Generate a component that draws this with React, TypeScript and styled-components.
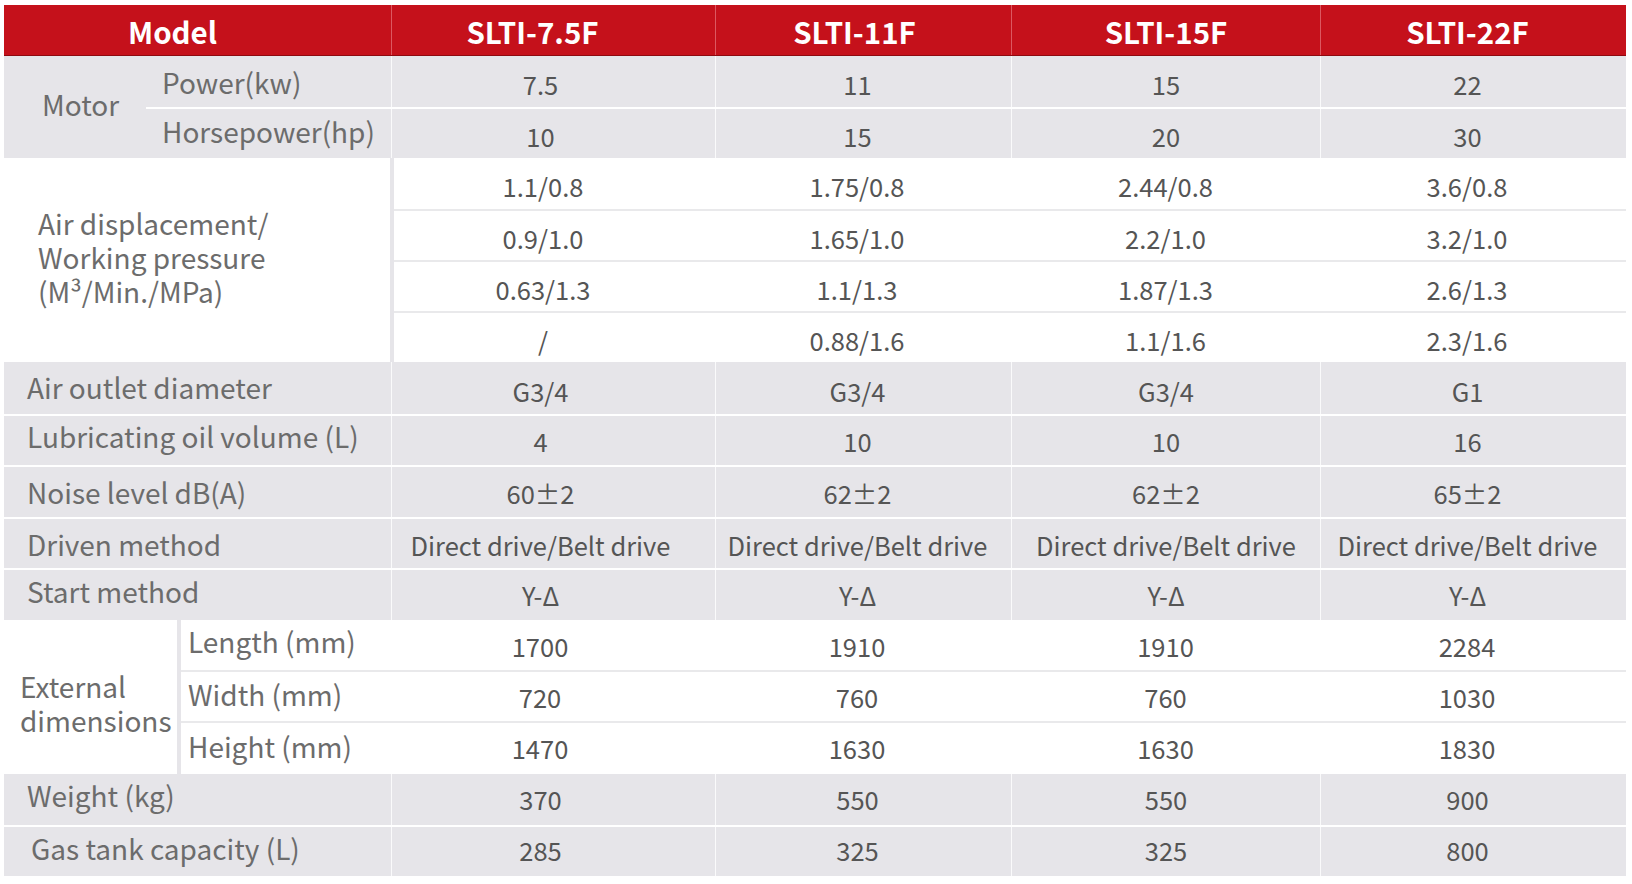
import React from 'react';
import styled, { createGlobalStyle } from 'styled-components';

const GlobalStyle = createGlobalStyle`
  html, body { margin: 0; padding: 0; background: #ffffff; }
  body { font-family: "Noto Sans CJK SC", "Noto Sans", sans-serif; }
`;

const COLS = [324, 296, 309, 306];
const SHIFT = [26, 12, 0, 12];
const HEAD_SHIFT = [42, 18, 0, 12];
const LABEL_W = 387;
const GRAY = '#e6e5e9';
const MODELS = ['SLTI-7.5F', 'SLTI-11F', 'SLTI-15F', 'SLTI-22F'];

const Table = styled.div`
  margin: 5px 0 0 4px;
  width: 1622px;
  display: flex;
  flex-direction: column;
`;

const HeaderRow = styled.div`
  display: flex;
  height: 51px;
  box-sizing: border-box;
  background: #c5111b;
  border-bottom: 1px solid #8e0a10;
  color: #ffffff;
  font-weight: 700;
  font-size: 29.5px;
`;

const HeadCell = styled.div<{ $w: number; $pr: number; $divider?: boolean }>`
  width: ${(p) => p.$w}px;
  box-sizing: border-box;
  display: flex;
  align-items: center;
  justify-content: center;
  padding-right: ${(p) => p.$pr}px;
  padding-top: 2px;
  border-left: ${(p) => (p.$divider ? '1px solid #dc5860' : 'none')};
`;

const Band = styled.div<{ $gray?: boolean; $sep?: boolean }>`
  display: flex;
  background: ${(p) => (p.$gray ? GRAY : '#ffffff')};
  border-top: ${(p) => (p.$sep ? '2px solid #ffffff' : 'none')};
`;

const GroupLabel = styled.div<{ $w: number; $pl: number; $dy: number; $bar?: boolean }>`
  width: ${(p) => p.$w}px;
  flex: none;
  box-sizing: border-box;
  padding-left: ${(p) => p.$pl}px;
  padding-top: ${(p) => (p.$dy > 0 ? p.$dy * 2 : 0)}px;
  padding-bottom: ${(p) => (p.$dy < 0 ? -p.$dy * 2 : 0)}px;
  display: flex;
  align-items: center;
  font-size: 28px;
  line-height: 34px;
  color: #6c6c6c;
  border-right: ${(p) => (p.$bar ? `4px solid ${GRAY}` : 'none')};
`;

const Stack = styled.div`
  flex: 1;
  display: flex;
  flex-direction: column;
`;

const Row = styled.div<{ $h: number; $line?: 'white' | 'gray' }>`
  display: flex;
  height: ${(p) => p.$h}px;
  box-sizing: border-box;
  border-top: ${(p) =>
    p.$line === 'white' ? '2px solid #ffffff' : p.$line === 'gray' ? '2px solid #e9e9eb' : 'none'};
`;

const Label = styled.div<{ $w: number; $pl: number; $up: number }>`
  width: ${(p) => p.$w}px;
  flex: none;
  box-sizing: border-box;
  padding-left: ${(p) => p.$pl}px;
  padding-bottom: ${(p) => p.$up * 2}px;
  display: flex;
  align-items: center;
  font-size: 28px;
  color: #6c6c6c;
  white-space: nowrap;
`;

const Cell = styled.div<{ $w: number; $pr: number; $top: number; $bottom: number; $rule?: boolean }>`
  width: ${(p) => p.$w}px;
  flex: none;
  box-sizing: border-box;
  padding: ${(p) => `${p.$top}px ${p.$pr}px ${p.$bottom}px 0`};
  display: flex;
  align-items: center;
  justify-content: center;
  font-size: 25.5px;
  color: #555555;
  white-space: nowrap;
  border-left: ${(p) => (p.$rule ? '1px solid rgba(255,255,255,0.8)' : 'none')};
`;

type Vals = string[];

const DataCells: React.FC<{ vals: Vals; gray?: boolean; trim?: number; up?: number }> = ({
  vals,
  gray,
  trim = 0,
  up = 0,
}) => {
  const top = up <= 2 ? 4 - 2 * up : 0;
  const bottom = up > 2 ? 2 * up - 4 : 0;
  return (
    <>
      {vals.map((v, i) => (
        <Cell
          key={i}
          $w={i === 0 ? COLS[0] - trim : COLS[i]}
          $pr={i === 0 ? Math.max(SHIFT[0] - trim, 0) : SHIFT[i]}
          $top={top}
          $bottom={bottom}
          $rule={gray}
        >
          {v}
        </Cell>
      ))}
    </>
  );
};

type SimpleRow = { label: string; pl: number; h: number; up: number; dup: number; vals: Vals };

const simpleRows: SimpleRow[] = [
  { label: 'Air outlet diameter', pl: 23, h: 52, up: 1, dup: 0, vals: ['G3/4', 'G3/4', 'G3/4', 'G1'] },
  { label: 'Lubricating oil volume (L)', pl: 23, h: 51, up: 5, dup: 2, vals: ['4', '10', '10', '16'] },
  { label: 'Noise level dB(A)', pl: 23, h: 52, up: 0, dup: 2, vals: ['60±2', '62±2', '62±2', '65±2'] },
  {
    label: 'Driven method',
    pl: 23,
    h: 51,
    up: -1,
    dup: 1,
    vals: ['Direct drive/Belt drive', 'Direct drive/Belt drive', 'Direct drive/Belt drive', 'Direct drive/Belt drive'],
  },
  { label: 'Start method', pl: 23, h: 52, up: 4, dup: 3, vals: ['Y-Δ', 'Y-Δ', 'Y-Δ', 'Y-Δ'] },
];

const airRows: Vals[] = [
  ['1.1/0.8', '1.75/0.8', '2.44/0.8', '3.6/0.8'],
  ['0.9/1.0', '1.65/1.0', '2.2/1.0', '3.2/1.0'],
  ['0.63/1.3', '1.1/1.3', '1.87/1.3', '2.6/1.3'],
  ['/', '0.88/1.6', '1.1/1.6', '2.3/1.6'],
];

const dimRows: { label: string; h: number; up: number; dup: number; vals: Vals }[] = [
  { label: 'Length (mm)', h: 50, up: 4, dup: 2, vals: ['1700', '1910', '1910', '2284'] },
  { label: 'Width (mm)', h: 51, up: 3, dup: 2, vals: ['720', '760', '760', '1030'] },
  { label: 'Height (mm)', h: 53, up: 3, dup: 3, vals: ['1470', '1630', '1630', '1830'] },
];

const tailRows: SimpleRow[] = [
  { label: 'Weight (kg)', pl: 23, h: 51, up: 5, dup: 3, vals: ['370', '550', '550', '900'] },
  { label: 'Gas tank capacity (L)', pl: 27, h: 51, up: 4, dup: 4, vals: ['285', '325', '325', '800'] },
];

const GrayRows: React.FC<{ rows: SimpleRow[] }> = ({ rows }) => (
  <>
    {rows.map((r, i) => (
      <Band key={r.label} $gray $sep={i > 0}>
        <Row $h={i > 0 ? r.h - 2 : r.h}>
          <Label $w={LABEL_W} $pl={r.pl} $up={r.up}>
            {r.label}
          </Label>
          <DataCells vals={r.vals} gray up={r.dup} />
        </Row>
      </Band>
    ))}
  </>
);

export default function App() {
  return (
    <>
      <GlobalStyle />
      <Table>
        <HeaderRow>
          <HeadCell $w={LABEL_W} $pr={50}>
            Model
          </HeadCell>
          {MODELS.map((m, i) => (
            <HeadCell key={m} $w={COLS[i]} $pr={HEAD_SHIFT[i]} $divider>
              {m}
            </HeadCell>
          ))}
        </HeaderRow>

        <Band $gray>
          <GroupLabel $w={142} $pl={38} $dy={-3}>
            Motor
          </GroupLabel>
          <Stack>
            <Row $h={51}>
              <Label $w={LABEL_W - 142} $pl={16} $up={0}>
                Power(kw)
              </Label>
              <DataCells vals={['7.5', '11', '15', '22']} gray />
            </Row>
            <Row $h={51} $line="white">
              <Label $w={LABEL_W - 142} $pl={16} $up={3}>
                Horsepower(hp)
              </Label>
              <DataCells vals={['10', '15', '20', '30']} gray />
            </Row>
          </Stack>
        </Band>

        <Band>
          <GroupLabel $w={LABEL_W + 3} $pl={34} $dy={-3} $bar>
            Air displacement/
            <br />
            Working pressure
            <br />
            (M³/Min./MPa)
          </GroupLabel>
          <Stack>
            {airRows.map((vals, i) => (
              <Row key={i} $h={51} $line={i > 0 ? 'gray' : undefined}>
                <DataCells vals={vals} trim={3} />
              </Row>
            ))}
          </Stack>
        </Band>

        <GrayRows rows={simpleRows} />

        <Band>
          <GroupLabel $w={177} $pl={16} $dy={6} $bar>
            External
            <br />
            dimensions
          </GroupLabel>
          <Stack>
            {dimRows.map((r, i) => (
              <Row key={r.label} $h={r.h} $line={i > 0 ? 'gray' : undefined}>
                <Label $w={LABEL_W - 177} $pl={7} $up={r.up}>
                  {r.label}
                </Label>
                <DataCells vals={r.vals} up={r.dup} />
              </Row>
            ))}
          </Stack>
        </Band>

        <GrayRows rows={tailRows} />
      </Table>
    </>
  );
}
